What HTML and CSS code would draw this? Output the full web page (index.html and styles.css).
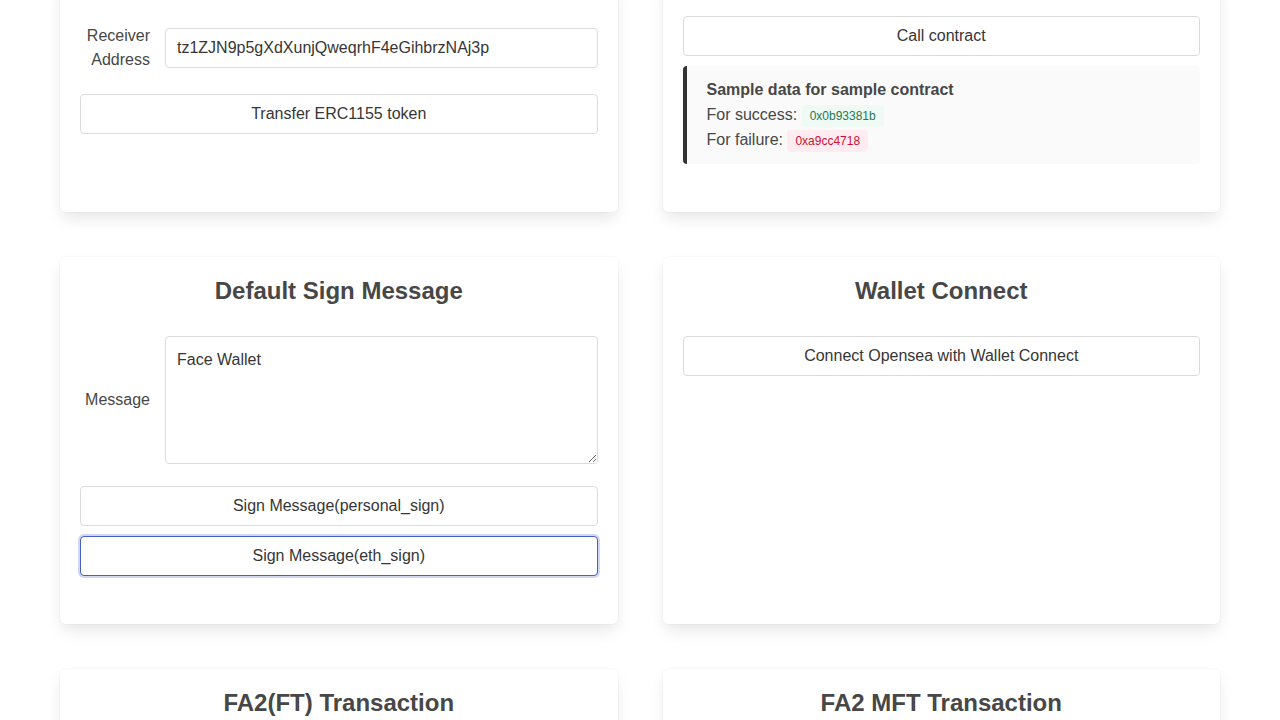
FILE: index.html
```html
<!DOCTYPE html>
<html lang="en">
<head>
<meta charset="utf-8">
<title>Face Wallet Sample</title>
<link rel="stylesheet" href="styles.css">
</head>
<body>
<main class="page">
  <section class="card card-cont-left">
    <div class="form-row">
      <label class="form-label">Receiver Address</label>
      <input class="input" type="text" value="tz1ZJN9p5gXdXunjQweqrhF4eGihbrzNAj3p">
    </div>
    <button class="btn" type="button">Transfer ERC1155 token</button>
  </section>

  <section class="card card-cont-right">
    <button class="btn" type="button">Call contract</button>
    <div class="note">
      <div class="note-title">Sample data for sample contract</div>
      <div class="note-line">For success: <code class="badge badge-success">0x0b93381b</code></div>
      <div class="note-line">For failure: <code class="badge badge-danger">0xa9cc4718</code></div>
    </div>
  </section>

  <section class="card">
    <h2 class="card-title">Default Sign Message</h2>
    <div class="form-row">
      <label class="form-label">Message</label>
      <textarea class="textarea">Face Wallet</textarea>
    </div>
    <button class="btn" type="button">Sign Message(personal_sign)</button>
    <button class="btn btn-focus" type="button">Sign Message(eth_sign)</button>
  </section>

  <section class="card">
    <h2 class="card-title">Wallet Connect</h2>
    <button class="btn" type="button">Connect Opensea with Wallet Connect</button>
  </section>

  <section class="card">
    <h2 class="card-title">FA2(FT) Transaction</h2>
  </section>

  <section class="card">
    <h2 class="card-title">FA2 MFT Transaction</h2>
  </section>
</main>
</body>
</html>
```

FILE: styles.css
```css
* {
  box-sizing: border-box;
}

html, body {
  margin: 0;
  background: #ffffff;
}

body {
  font-family: "Liberation Sans", Arial, sans-serif;
  font-size: 16px;
  line-height: 24px;
  color: #474747;
}

.page {
  display: grid;
  grid-template-columns: 1fr 1fr;
  column-gap: 45px;
  row-gap: 45px;
  padding: 0 60px 60px;
  margin-top: -20px;
}

.card {
  background: #ffffff;
  border-radius: 6px;
  box-shadow: 0 8px 16px -2px rgba(10, 10, 10, 0.1), 0 0 0 1px rgba(10, 10, 10, 0.02);
  padding: 20px 20px 38px;
  display: flex;
  flex-direction: column;
}

/* top row is scrolled past: only the lower part of these cards is in view */
.card-cont-left {
  padding-top: 44px;
}

.card-cont-right {
  padding-top: 36px;
}

.card-title {
  margin: 0 0 32px;
  font-size: 24px;
  line-height: 27px;
  font-weight: 700;
  text-align: center;
  color: #474747;
}

.form-row {
  display: flex;
  align-items: center;
  gap: 15px;
  margin-bottom: 22px;
}

.form-label {
  flex: 0 0 70px;
  width: 70px;
  text-align: right;
  line-height: 24px;
  color: #474747;
}

.input,
.textarea {
  flex: 1;
  min-width: 0;
  border: 1px solid #dbdbdb;
  border-radius: 4px;
  font-family: "Liberation Sans", Arial, sans-serif;
  font-size: 16px;
  color: #363636;
  background: #ffffff;
  outline: none;
}

.input {
  height: 40px;
  padding: 0 11px;
}

.textarea {
  height: 128px;
  padding: 11px;
  line-height: 24px;
  resize: vertical;
}

.btn {
  display: block;
  width: 100%;
  height: 40px;
  margin: 0 0 10px;
  padding: 0 16px;
  border: 1px solid #dbdbdb;
  border-radius: 4px;
  background: #ffffff;
  font-family: "Liberation Sans", Arial, sans-serif;
  font-size: 16px;
  color: #363636;
  text-align: center;
  cursor: pointer;
}

.btn-focus {
  border-color: #485fc7;
  box-shadow: 0 0 0 2px rgba(72, 95, 199, 0.25);
}

.note {
  background: #fafafa;
  border-left: 4px solid #333333;
  border-radius: 4px;
  padding: 11px 20px 12px;
  margin: 0 0 10px;
  line-height: 25px;
}

.note-title {
  font-weight: 700;
}

.badge {
  display: inline-block;
  font-family: "Liberation Sans", Arial, sans-serif;
  font-size: 12px;
  line-height: 22px;
  padding: 0 8px;
  border-radius: 4px;
  vertical-align: middle;
}

.badge-success {
  background: #effaf5;
  color: #257953;
}

.badge-danger {
  background: #feecf0;
  color: #cc0f35;
}
```
